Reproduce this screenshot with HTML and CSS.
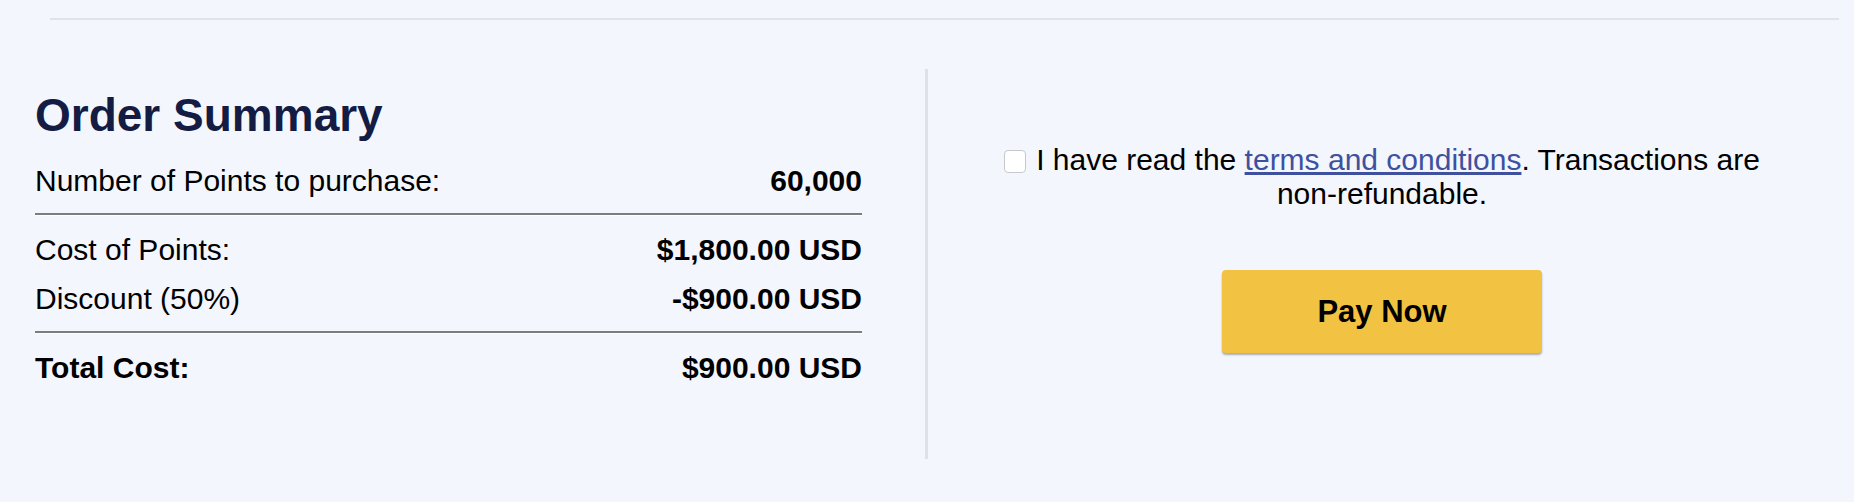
FILE: index.html
```html
<!DOCTYPE html>
<html lang="en">
<head>
<meta charset="utf-8">
<title>Order Summary</title>
<link rel="stylesheet" href="styles.css">
</head>
<body>
<div class="page">
  <div class="top-rule"></div>
  <div class="content">
    <section class="summary">
      <h2 class="summary-title">Order Summary</h2>
      <div class="row"><span>Number of Points to purchase:</span><span class="val">60,000</span></div>
      <hr class="sep">
      <div class="row"><span>Cost of Points:</span><span class="val">$1,800.00 USD</span></div>
      <div class="row"><span>Discount (50%)</span><span class="val">-$900.00 USD</span></div>
      <hr class="sep">
      <div class="row total"><span>Total Cost:</span><span class="val">$900.00 USD</span></div>
    </section>
    <section class="pay">
      <label class="terms"><span class="check"></span><span class="terms-text">I have read the <a href="#" class="link">terms and conditions</a>. Transactions are non-refundable.</span></label>
      <button class="pay-btn" type="button">Pay Now</button>
    </section>
  </div>
</div>
</body>
</html>
```
FILE: styles.css
```css
html, body {
  margin: 0;
  padding: 0;
  background: #f3f6fd;
}
body {
  font-family: "Liberation Sans", Arial, Helvetica, sans-serif;
  color: #000;
}
.page {
  padding-top: 18px;
  height: 502px;
  box-sizing: border-box;
}
.top-rule {
  margin: 0 15px 0 50px;
  height: 2px;
  background: #dfe4ec;
}
.content {
  display: flex;
  margin-top: 49px;
  height: 390px;
}
.summary {
  width: 925px;
  box-sizing: border-box;
  padding: 19px 63px 0 35px;
}
.summary-title {
  margin: 0 0 14px;
  font-size: 46px;
  line-height: 54px;
  font-weight: 700;
  color: #141c43;
}
.row {
  display: flex;
  justify-content: space-between;
  font-size: 30px;
  line-height: 49px;
}
.row .val {
  font-weight: 700;
}
.row.total span:first-child {
  font-weight: 700;
}
.sep {
  margin: 8px 0 9px;
  height: 0;
  border: 0;
  border-top: 2px solid #7d7d7d;
  border-bottom: 1px solid #ffffff;
}
.pay {
  flex: 1;
  border-left: 3px solid #dde2ea;
  display: flex;
  flex-direction: column;
  align-items: center;
  padding-top: 74px;
  margin-right: 18px;
}
.terms {
  display: block;
  margin: 0;
  max-width: 780px;
  text-align: center;
  font-size: 30px;
  line-height: 34px;
}
.check {
  display: inline-block;
  width: 20px;
  height: 21px;
  border: 1px solid #c6c8cc;
  border-radius: 4px;
  background: #ffffff;
  vertical-align: -3px;
  margin-right: 10px;
}
.link {
  color: #3f519e;
  text-decoration: underline;
}
.pay-btn {
  margin-top: 59px;
  width: 320px;
  height: 83px;
  border: 0;
  border-radius: 4px;
  background: #f2c342;
  box-shadow: 0 2px 2px rgba(0, 0, 0, 0.3);
  font-family: inherit;
  font-size: 31px;
  font-weight: 700;
  color: #000;
}
```
